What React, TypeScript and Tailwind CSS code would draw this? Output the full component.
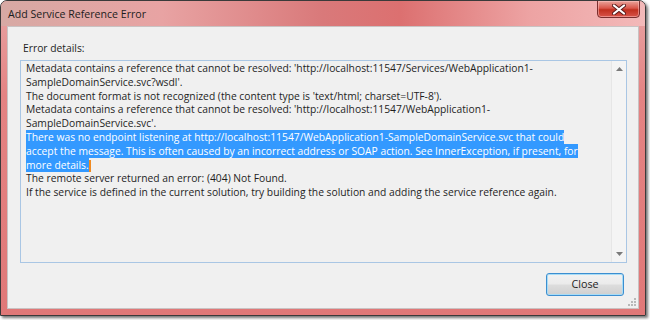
import React from "react";

const FONT = { fontFamily: '"Open Sans", "Segoe UI", "Noto Sans", sans-serif' };

type Line = { text: string; sel?: boolean; caret?: boolean };

const LINES: Line[] = [
  { text: "Metadata contains a reference that cannot be resolved: 'http://localhost:11547/Services/WebApplication1-" },
  { text: "SampleDomainService.svc?wsdl'." },
  { text: "The document format is not recognized (the content type is 'text/html; charset=UTF-8')." },
  { text: "Metadata contains a reference that cannot be resolved: 'http://localhost:11547/WebApplication1-" },
  { text: "SampleDomainService.svc'." },
  { text: "There was no endpoint listening at http://localhost:11547/WebApplication1-SampleDomainService.svc that could", sel: true },
  { text: "accept the message. This is often caused by an incorrect address or SOAP action. See InnerException, if present, for", sel: true },
  { text: "more details.", sel: true, caret: true },
  { text: "The remote server returned an error: (404) Not Found." },
  { text: "If the service is defined in the current solution, try building the solution and adding the service reference again." },
];

function CloseGlyph() {
  return (
    <svg width="14" height="11" viewBox="0 0 14 11">
      <path d="M2 1.5 L12 9.5 M12 1.5 L2 9.5" stroke="#5a1c1c" strokeWidth="4" strokeLinecap="round" />
      <path d="M2 1.5 L12 9.5 M12 1.5 L2 9.5" stroke="#ffffff" strokeWidth="2.2" strokeLinecap="round" />
    </svg>
  );
}

function Arrow({ up }: { up?: boolean }) {
  return (
    <svg width="7" height="4" viewBox="0 0 7 4">
      <path d={up ? "M0 4 L3.5 0 L7 4 Z" : "M0 0 L3.5 4 L7 0 Z"} fill="#7a7a7a" />
    </svg>
  );
}

export default function App() {
  return (
    <div className="w-[650px] h-[320px] bg-white" style={FONT}>
      <div className="w-[646px] h-[316px] rounded-t-[7px] border border-[#3a3a3a] shadow-[2px_2px_3px_rgba(0,0,0,0.55)] bg-[linear-gradient(to_bottom,#e8a4a4,#e48383_30%,#e07878)] flex flex-col overflow-hidden">
        {/* Title bar */}
        <div className="h-[25px] flex items-start justify-between bg-[linear-gradient(to_right,#d7a9a4,#e8a3a3_25%,#d9797a_50%,#dc7070_62%,#eda3a3_82%,#f3b9b9)]">
          <span className="pl-[7px] pt-[5px] text-[10.6px] text-[#1c1c1c] leading-[16px]">Add Service Reference Error</span>
          <div className="mr-[5px] w-[43px] h-[18px] -mt-px rounded-b-[4px] border border-[#7a2e2e] bg-[linear-gradient(to_bottom,#eaa59c,#d9564a_45%,#c0301f_55%,#d8544a)] flex items-center justify-center shadow-[inset_0_0_0_1px_rgba(255,200,200,0.5)]">
            <CloseGlyph />
          </div>
        </div>

        {/* Client area */}
        <div className="flex-1 mx-[6px] mb-[6px] border border-[#c9c2c2] bg-[#f0f0f0] flex flex-col relative">
          <div className="pl-[15px] pt-[14px] text-[10.3px] leading-[15px] text-[#1e1e1e]">Error details:</div>

          <div className="ml-[12px] mt-[4px] w-[607px] h-[203px] border border-[#a9c6e4] flex">
            <div className="flex-1 pl-[5px] pt-[1px] text-[10.3px] leading-[13.8px] text-[#1e1e1e]">
              {LINES.map((l, i) => (
                <div key={i} className="whitespace-nowrap h-[13.8px]">
                  {l.sel ? (
                    <span className="bg-[#3399ff] text-white">{l.text}</span>
                  ) : (
                    l.text
                  )}
                  {l.caret && <span className="inline-block w-[2px] h-[12px] align-middle bg-[#f08a20]" />}
                </div>
              ))}
            </div>
            <div className="w-[15px] border-l border-[#e6e6e6] bg-[#f4f4f4] flex flex-col items-center justify-between py-[6px]">
              <Arrow up />
              <Arrow />
            </div>
          </div>

          <div className="flex justify-end pr-[14px] mt-[10px]">
            <button className="w-[78px] h-[23px] rounded-[3px] border border-[#3c8ed0] shadow-[inset_0_0_0_1px_#a8dcf6] bg-[linear-gradient(to_bottom,#f2f2f2,#ebebeb_48%,#dddddd_52%,#cfcfcf)] text-[10.8px] text-[#1e1e1e]">
              Close
            </button>
          </div>

          {/* resize grip */}
          <div className="absolute right-[2px] bottom-[2px] grid grid-cols-3 gap-[1px]">
            <span className="w-[2px] h-[2px]" />
            <span className="w-[2px] h-[2px]" />
            <span className="w-[2px] h-[2px] bg-[#b8b8b8]" />
            <span className="w-[2px] h-[2px]" />
            <span className="w-[2px] h-[2px] bg-[#b8b8b8]" />
            <span className="w-[2px] h-[2px] bg-[#b8b8b8]" />
            <span className="w-[2px] h-[2px] bg-[#b8b8b8]" />
            <span className="w-[2px] h-[2px] bg-[#b8b8b8]" />
            <span className="w-[2px] h-[2px] bg-[#b8b8b8]" />
          </div>
        </div>
      </div>
    </div>
  );
}
